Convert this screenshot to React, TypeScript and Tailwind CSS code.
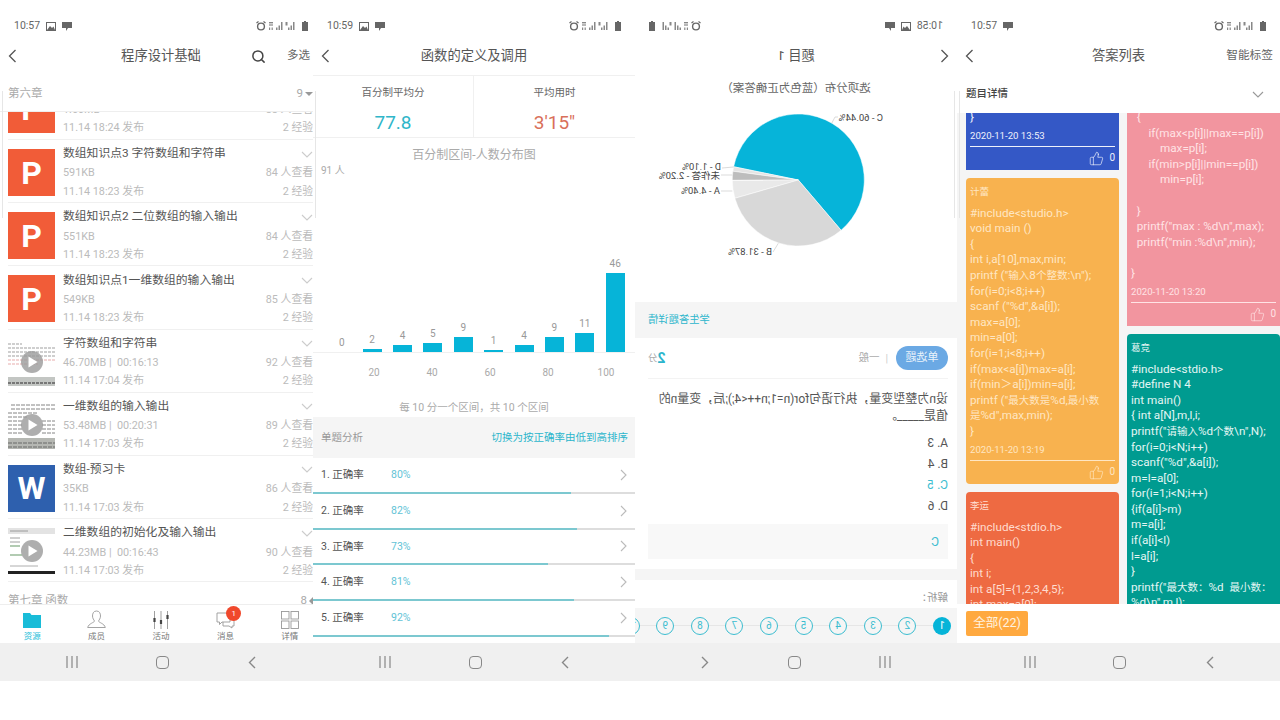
import { Search, ThumbsUp } from "lucide-react";

const Back = () => (
  <svg width="9" height="14" viewBox="0 0 9 14" fill="none" stroke="#555" strokeWidth="1.3">
    <path d="M7.5 1 L1.5 7 L7.5 13" />
  </svg>
);

const ChevronDown = ({ color = "#ccc" }: { color?: string }) => (
  <svg width="12" height="7" viewBox="0 0 12 7" fill="none" stroke={color} strokeWidth="1.1">
    <path d="M1 1 L6 6 L11 1" />
  </svg>
);

const ChevronRight = () => (
  <svg width="7" height="12" viewBox="0 0 7 12" fill="none" stroke="#bbb" strokeWidth="1.1">
    <path d="M1 1 L6 6 L1 11" />
  </svg>
);

const StatusBar = ({ time, image = true }: { time: string; image?: boolean }) => (
  <div className="h-[40px] pt-[12px] px-[14px] flex items-center justify-between text-[#666] shrink-0">
    <div className="flex items-center gap-[6px]">
      <span className="text-[10.5px]">{time}</span>
      {image && (
        <svg width="10" height="9" viewBox="0 0 10 9">
          <rect x="0.5" y="0.5" width="9" height="8" fill="none" stroke="#666" />
          <path d="M1 8 L4 4 L6 6 L7.5 4.5 L9 8 Z" fill="#666" />
        </svg>
      )}
      <svg width="10" height="9" viewBox="0 0 10 9">
        <path d="M0 0 H10 V6 H6 L4 9 V6 H0 Z" fill="#666" />
      </svg>
    </div>
    <div className="flex items-center gap-[2px]">
      <svg width="10" height="10" viewBox="0 0 10 10">
        <circle cx="5" cy="5.5" r="3.4" fill="none" stroke="#666" strokeWidth="1.4" />
        <path d="M0.5 2 L2.5 0.5 M9.5 2 L7.5 0.5" stroke="#666" strokeWidth="1.2" />
      </svg>
      <svg width="32" height="10" viewBox="0 0 32 10" fill="#888">
        <rect x="1" y="1" width="4" height="1.4" />
        <rect x="1" y="3.4" width="4" height="1.2" />
        <rect x="1" y="6.5" width="1.2" height="2.5" />
        <rect x="3.6" y="6.5" width="1.2" height="2.5" />
        <rect x="8" y="6.5" width="1.5" height="2.5" />
        <rect x="10.5" y="4.5" width="1.5" height="4.5" />
        <rect x="13" y="1" width="1.5" height="8" />
        <rect x="17.5" y="1" width="2" height="3.5" />
        <rect x="20" y="6.5" width="1.5" height="2.5" />
        <rect x="22.5" y="4.5" width="1.5" height="4.5" />
        <rect x="25" y="1" width="1.5" height="8" />
      </svg>
      <svg width="6" height="10" viewBox="0 0 6 10">
        <path d="M2 0 H4 V1 H6 V10 H0 V1 H2 Z" fill="#666" />
      </svg>
    </div>
  </div>
);

const NavKeys = () => (
  <div className="h-[38px] pl-[2px] bg-[#f0f0f0] flex justify-center items-center shrink-0">
    <div className="w-[90px] flex justify-center">
      <svg width="12" height="12" viewBox="0 0 12 12" stroke="#888" strokeWidth="1.2">
        <path d="M1 0 V12 M6 0 V12 M11 0 V12" />
      </svg>
    </div>
    <div className="w-[90px] flex justify-center">
      <div className="w-[13px] h-[13px] border-[1.5px] border-[#888] rounded-[4px]" />
    </div>
    <div className="w-[90px] flex justify-center">
      <svg width="8" height="13" viewBox="0 0 8 13" fill="none" stroke="#888" strokeWidth="1.4">
        <path d="M7 1 L1.5 6.5 L7 12" />
      </svg>
    </div>
  </div>
);

const Header = ({ title, right }: { title: string; right?: React.ReactNode }) => (
  <div className="h-[35px] pb-[3px] grid grid-cols-[80px_1fr_80px] items-center shrink-0">
    <div className="pl-[8px]">
      <Back />
    </div>
    <div className="text-center text-[13.3px] text-[#555] whitespace-nowrap">{title}</div>
    <div className="flex justify-end items-center">{right}</div>
  </div>
);

const EdgeLine = () => <div className="absolute left-[2px] top-[91px] h-[127px] w-px bg-[#e6e6e6]" />;

const PptThumb = () => (
  <div className="w-[47px] h-[47px] bg-[#f15c38] flex items-center justify-center text-white text-[32px] font-bold">P</div>
);

const WordThumb = () => (
  <div className="w-[47px] h-[47px] bg-[#2e60ae] flex items-center justify-center text-white text-[32px] font-bold">W</div>
);

const VideoThumb = ({ kind }: { kind: number }) => (
  <svg width="47" height="47" viewBox="0 0 47 47" className="block">
    <rect width="47" height="47" fill="#fff" />
    {kind === 0 && (
      <g stroke="#777" strokeWidth="0.7" strokeDasharray="3 1">
        <path d="M0 5 H14 M0 9 H47 M0 13 H47 M0 17 H47" />
        <path d="M0 21 H47" stroke="#d88" />
        <path d="M0 25 H30" stroke="#d88" />
        <rect x="0" y="38" width="47" height="9" fill="#c3c6c3" stroke="none" />
        <path d="M0 44 H47" stroke="#777" strokeWidth="2" />
      </g>
    )}
    {kind === 1 && (
      <g stroke="#666" strokeWidth="0.8" strokeDasharray="4 1">
        <path d="M3 3 H47 M3 7 H47 M0 11 H30 M0 15 H20 M0 19 H14 M34 19 H47 M0 23 H14 M34 23 H47 M0 27 H14 M34 27 H47 M0 31 H14 M34 31 H47" />
        <rect x="0" y="36" width="47" height="11" fill="#b5b7b2" stroke="none" />
        <path d="M0 41 H47 M0 45 H47" stroke="#555" />
      </g>
    )}
    {kind === 2 && (
      <g>
        <rect x="0" y="0" width="47" height="6" fill="#e3e3e3" />
        <path d="M2 3 H20 M2 10 H12 M2 14 H12" stroke="#888" strokeWidth="0.8" />
        <path d="M2 18 H12 M2 27 H14" stroke="#9b9" strokeWidth="1.4" />
        <path d="M2 38 H30" stroke="#999" strokeWidth="0.8" />
        <rect x="0" y="43" width="47" height="3" fill="#222" />
      </g>
    )}
    <circle cx="24" cy="23" r="11" fill="#9a9a9a" opacity="0.8" />
    <path d="M20.5 17.5 L29.5 23 L20.5 28.5 Z" fill="#fff" />
  </svg>
);

const files = [
  { thumb: <PptThumb />, title: "", size: "1.60MB", time: "11.14 18:24 发布", views: "88 人查看" },
  { thumb: <PptThumb />, title: "数组知识点3 字符数组和字符串", size: "591KB", time: "11.14 18:23 发布", views: "84 人查看" },
  { thumb: <PptThumb />, title: "数组知识点2 二位数组的输入输出", size: "551KB", time: "11.14 18:23 发布", views: "84 人查看" },
  { thumb: <PptThumb />, title: "数组知识点1一维数组的输入输出", size: "549KB", time: "11.14 18:23 发布", views: "85 人查看" },
  { thumb: <VideoThumb kind={0} />, title: "字符数组和字符串", size: "46.70MB |  00:16:13", time: "11.14 17:04 发布", views: "92 人查看" },
  { thumb: <VideoThumb kind={1} />, title: "一维数组的输入输出", size: "53.48MB |  00:20:31", time: "11.14 17:03 发布", views: "89 人查看" },
  { thumb: <WordThumb />, title: "数组-预习卡", size: "35KB", time: "11.14 17:03 发布", views: "86 人查看" },
  { thumb: <VideoThumb kind={2} />, title: "二维数组的初始化及输入输出", size: "44.23MB |  00:16:43", time: "11.14 17:03 发布", views: "90 人查看" },
];

const FileRow = ({ file }: { file: (typeof files)[number] }) => (
  <div className="h-[63.2px] ml-[8px] mr-[9px] border-b border-[#f0f0f0] flex shrink-0">
    <div className="pt-[9px] w-[55px] shrink-0">{file.thumb}</div>
    <div className="flex-1 pt-[4px] text-[10.8px] text-[#bbb] whitespace-pre">
      <div className="h-[20px] flex items-center justify-between text-[11.8px] text-[#555]">
        <span>{file.title}</span>
        <ChevronDown />
      </div>
      <div className="h-[19px] flex items-center justify-between">
        <span>{file.size}</span>
        <span>{file.views}</span>
      </div>
      <div className="h-[17.5px] flex items-center justify-between">
        <span>{file.time}</span>
        <span>2 经验</span>
      </div>
    </div>
  </div>
);

const tabs = [
  {
    label: "资源",
    icon: (
      <svg width="18" height="16" viewBox="0 0 18 16">
        <path d="M0 1 H7 L8.5 3 H18 V16 H0 Z" fill="#19bcd8" />
      </svg>
    ),
  },
  {
    label: "成员",
    icon: (
      <svg width="19" height="19" viewBox="0 0 19 19" fill="none" stroke="#999" strokeWidth="0.9">
        <path d="M9.5 1 C6.5 1 5.5 3.5 5.5 6 C5.5 8.5 7 10 7.5 11 C7.5 12.5 1.5 13.5 0.7 17.5 H18.3 C17.5 13.5 11.5 12.5 11.5 11 C12 10 13.5 8.5 13.5 6 C13.5 3.5 12.5 1 9.5 1 Z" />
      </svg>
    ),
  },
  {
    label: "活动",
    icon: (
      <svg width="18" height="18" viewBox="0 0 18 18" stroke="#777">
        <path d="M2.5 0 V18 M9 0 V18 M15.5 0 V18" strokeWidth="0.7" />
        <path d="M2.5 7 V11 M9 9 V13 M15.5 4 V8" strokeWidth="2.2" stroke="#444" />
      </svg>
    ),
  },
  {
    label: "消息",
    icon: (
      <svg width="19" height="18" viewBox="0 0 19 18" fill="none" stroke="#999" strokeWidth="0.9">
        <path d="M1 2 H14 V11 H6 L3.5 13.5 V11 H1 Z" />
        <path d="M14 6 H18 V15 H16 V17 L13 15 H7 V11" />
      </svg>
    ),
  },
  {
    label: "详情",
    icon: (
      <svg width="18" height="18" viewBox="0 0 18 18" fill="none" stroke="#999" strokeWidth="0.9">
        <rect x="0.5" y="0.5" width="7.5" height="7.5" />
        <rect x="10" y="0.5" width="7.5" height="7.5" />
        <rect x="0.5" y="10" width="7.5" height="7.5" />
        <rect x="10" y="10" width="7.5" height="7.5" />
      </svg>
    ),
  },
];

const FilesScreen = () => (
  <div className="w-[313px] h-[681px] overflow-hidden shrink-0">
    <div className="relative w-[322px] h-[681px] flex flex-col bg-white overflow-hidden">
      <StatusBar time="10:57" />
      <Header
        title="程序设计基础"
        right={
          <div className="flex items-center gap-[21px] pr-[12px]">
            <Search size={15} color="#444" strokeWidth={2.4} />
            <span className="text-[11.5px] text-[#666]">多选</span>
          </div>
        }
      />
      <div className="h-[37px] pl-[8px] pr-[9px] pt-[2px] flex items-center justify-between text-[11.5px] text-[#aaa] border-b border-[#eee] shrink-0">
        <span>第六章</span>
        <span className="flex items-center gap-[2px]">
          9<span className="w-0 h-0 border-x-[4px] border-x-transparent border-t-[4px] border-t-[#999]" />
        </span>
      </div>
      <div className="flex-1 overflow-hidden">
        <div className="-mt-[35.2px]">
          {files.map((f, i) => (
            <FileRow key={i} file={f} />
          ))}
        </div>
        <div className="h-[37px] pl-[8px] pr-[9px] flex items-center justify-between text-[11.5px] text-[#aaa]">
          <span>第七章 函数</span>
          <span className="flex items-center gap-[2px]">
            8<span className="w-0 h-0 border-y-[4px] border-y-transparent border-r-[4px] border-r-[#999]" />
          </span>
        </div>
      </div>
      <div className="h-[39px] border-t border-[#eee] flex bg-white shrink-0">
        {tabs.map((t, i) => (
          <div key={t.label} className="relative flex-1 flex flex-col items-center">
            <div className="h-[26px] flex items-center pt-[3px]">{t.icon}</div>
            <span className={i === 0 ? "text-[8.5px] leading-[10px] text-[#19bcd8]" : "text-[8.5px] leading-[10px] text-[#777]"}>{t.label}</span>
            {i === 3 && (
              <span className="absolute left-[33px] top-[1px] w-[15px] h-[15px] rounded-full bg-[#f0482c] text-white text-[8px] flex items-center justify-center">
                1
              </span>
            )}
          </div>
        ))}
      </div>
      <NavKeys />
      <EdgeLine />
    </div>
  </div>
);

const bars = [0, 2, 4, 5, 9, 1, 4, 9, 11, 46];
const rates = [80, 82, 73, 81, 92];

const StatsScreen = () => (
  <div className="relative w-[322px] h-[681px] flex flex-col bg-white overflow-hidden shrink-0">
    <StatusBar time="10:59" />
    <Header title="函数的定义及调用" />
    <div className="h-[63px] flex border-y border-[#f0f0f0] shrink-0">
      <div className="w-[161px] border-r border-[#f0f0f0] flex flex-col items-center">
        <span className="mt-[9px] text-[10.5px] text-[#666]">百分制平均分</span>
        <span className="mt-[8px] text-[19px] leading-[28px] text-[#2fb6c9]">77.8</span>
      </div>
      <div className="flex-1 flex flex-col items-center">
        <span className="mt-[9px] text-[10.5px] text-[#666]">平均用时</span>
        <span className="mt-[8px] text-[19px] leading-[28px] text-[#d9705a]">3'15"</span>
      </div>
    </div>
    <div className="h-[25px] pt-[8px] flex items-center justify-center text-[12px] text-[#aaa] shrink-0">百分制区间-人数分布图</div>
    <div className="h-[16px] pl-[8px] text-[10px] leading-[16px] text-[#aaa] shrink-0">91 人</div>
    <div className="h-[174px] pl-[13.5px] flex items-end border-b border-[#f0f0f0] shrink-0">
      {bars.map((v, i) => (
        <div key={i} className="w-[30.4px] flex flex-col items-center">
          <span className="mb-[2px] text-[10px] leading-[14px] text-[#999]">{v}</span>
          <div className="w-[19px] bg-[#06b4d8]" style={{ height: v * 1.72 }} />
        </div>
      ))}
    </div>
    <div className="h-[38px] pl-[32px] flex items-center text-[10px] text-[#aaa] shrink-0">
      {[20, 40, 60, 80, 100].map((n) => (
        <span key={n} className="w-[58.5px] text-center">
          {n}
        </span>
      ))}
    </div>
    <div className="h-[26px] pt-[8px] flex items-center justify-center text-[10.5px] text-[#aaa] shrink-0">每 10 分一个区间，共 10 个区间</div>
    <div className="h-[41px] bg-[#f5f5f5] pl-[8px] pr-[7px] flex items-center justify-between shrink-0">
      <span className="text-[10.5px] text-[#999]">单题分析</span>
      <span className="text-[10.5px] text-[#2cb5cc]">切换为按正确率由低到高排序</span>
    </div>
    {rates.map((r, i) => (
      <div key={i} className="h-[35.8px] flex flex-col shrink-0">
        <div className="flex-1 flex items-center pl-[8px] pr-[8px]">
          <span className="w-[70px] text-[10.5px] text-[#555]">{i + 1}. 正确率</span>
          <span className="flex-1 text-[10.5px] text-[#62c3d6]">{r}%</span>
          <ChevronRight />
        </div>
        <div className="h-[2px] bg-[#dddddd]">
          <div className="h-[2px] bg-[#7cc8d0]" style={{ width: r + "%" }} />
        </div>
      </div>
    ))}
    <div className="flex-1" />
    <NavKeys />
    <EdgeLine />
  </div>
);

const PieChart = () => (
  <svg width="322" height="199" viewBox="0 0 322 199" className="block shrink-0">
    <g transform="translate(158.7 77)" stroke="#fff" strokeWidth="0.5">
      <path d="M0 0 L-42.78 50.26 A66 66 0 1 1 64.65 -13.27 Z" fill="#06b4d9" />
      <path d="M0 0 L64.65 -13.27 A66 66 0 0 1 65.41 -8.78 Z" fill="#e4e4e4" />
      <path d="M0 0 L65.41 -8.78 A66 66 0 0 1 66 0.35 Z" fill="#bdbdbd" />
      <path d="M0 0 L66 0.35 A66 66 0 0 1 63.41 18.3 Z" fill="#e9e9e9" />
      <path d="M0 0 L63.41 18.3 A66 66 0 0 1 -42.78 50.26 Z" fill="#d8d8d8" />
    </g>
    <g fill="none" stroke="#ccc" strokeWidth="0.7">
      <path d="M119 14 H122 L125.3 20.3" />
      <path d="M184 149 L178.7 140.3" />
      <path d="M236 88 H224.7" />
      <path d="M236 72 H224.7" />
      <path d="M235 65 L223.3 64" />
    </g>
    <g fill="#444" className="text-[9.5px]">
      <text x="74" y="17.5">C - 60.44%</text>
      <text x="185" y="152">B - 31.87%</text>
      <text x="237" y="91">A - 4.40%</text>
      <text x="237" y="76">未作答 - 2.20%</text>
      <text x="236" y="67">D - 1.10%</text>
    </g>
  </svg>
);

const QuestionScreen = () => (
  <div className="relative w-[322px] h-[681px] flex flex-col bg-white overflow-hidden shrink-0 -scale-x-100">
    <StatusBar time="10:58" />
    <Header title="题目 1" />
    <div className="h-[28px] flex items-center justify-center text-[11.5px] text-[#666] shrink-0">选项分布（蓝色为正确答案）</div>
    <PieChart />
    <div className="h-[36px] bg-[#f5f5f5] flex items-center justify-end pr-[13px] text-[10.3px] text-[#2cb5cc] shrink-0">学生答题详情</div>
    <div className="h-[41px] ml-[9px] mr-[13px] border-b border-[#f3f3f3] flex items-center shrink-0">
      <span className="w-[52px] h-[24px] rounded-full bg-[#6ba9e4] flex items-center justify-center text-[11px] text-[#eaf3fb]">单选题</span>
      <span className="ml-[8px] text-[10px] text-[#ccc]">|</span>
      <span className="ml-[6px] text-[10.5px] text-[#aaa]">一般</span>
      <span className="ml-auto text-[14px] font-bold text-[#2cb5cc] leading-none">2</span>
      <span className="text-[9.5px] text-[#aaa]">分</span>
    </div>
    <div className="mx-[9px] mt-[11.5px] text-[12px] leading-[17px] text-[#555] whitespace-nowrap shrink-0">
      <div>设n为整型变量，执行语句for(n=1;n++&lt;4;);后，变量n的</div>
      <div>值是_____。</div>
    </div>
    <div className="mx-[9px] mt-[8px] text-[12px] leading-[21px] text-[#555] shrink-0">
      <div>A. 3</div>
      <div>B. 4</div>
      <div className="text-[#3bbdd0]">C. 5</div>
      <div>D. 6</div>
    </div>
    <div className="ml-[9px] mr-[13px] mt-[7.5px] h-[35px] bg-[#f8f8f8] pl-[9px] flex items-center text-[12px] text-[#3bbdd0] shrink-0">C</div>
    <div className="mt-[10px] h-[11px] bg-[#f5f5f5] shrink-0" />
    <div className="h-[28px] pt-[8px] pl-[9px] flex items-center text-[10.5px] text-[#999] shrink-0">解析：</div>
    <div className="h-[35px] bg-[#f5f5f5] pl-[6px] flex items-center overflow-hidden shrink-0">
      {[1, 2, 3, 4, 5, 6, 7, 8, 9, 10].map((n) => (
        <div key={n} className="w-[34.6px] flex items-center shrink-0">
          <span
            className={
              n === 1
                ? "w-[18px] h-[18px] rounded-full bg-[#06b4d8] text-white text-[10px] flex items-center justify-center shrink-0"
                : "w-[18px] h-[18px] rounded-full border-[1.5px] border-[#3bbdd0] text-[#3bbdd0] text-[10px] flex items-center justify-center shrink-0"
            }
          >
            {n}
          </span>
          <span className="flex-1 h-px bg-[#e6e6e6]" />
        </div>
      ))}
    </div>
    <NavKeys />
    <EdgeLine />
  </div>
);

// the han text in the cards is drawn narrower than the latin around it
const CodeLine = ({ line }: { line: string }) => (
  <div className="h-[15.6px]">
    {line.split(/([\u4e00-\u9fff：]+)/).map((part, i) =>
      i % 2 ? (
        <span key={i} className="text-[10.5px]">
          {part}
        </span>
      ) : (
        part
      ),
    )}
  </div>
);

type CardProps = {
  color: string;
  text: string;
  name?: string;
  lines: string[];
  date?: string;
  flat?: boolean;
};

const AnswerCard = ({ color, text, name, lines, date, flat }: CardProps) => (
  <div className={(flat ? "" : "rounded-[4px] ") + color + " " + text + " px-[4px] text-[11.7px] leading-[15.6px] whitespace-pre shrink-0"}>
    {name && <div className="pt-[6px] mb-[6px] text-[9.5px] leading-[16px]">{name}</div>}
    {lines.map((l, i) => (
      <CodeLine key={i} line={l} />
    ))}
    {date && (
      <>
        <div className="mt-[2px] h-[16px] leading-[16px] text-[9.6px]">{date}</div>
        <div className="mt-[2px] h-[24px] border-t border-current flex items-center justify-end gap-[5px] text-[10px]">
          <ThumbsUp size={15} strokeWidth={1.1} />0
        </div>
      </>
    )}
  </div>
);

const AnswersScreen = () => (
  <div className="relative w-[323px] h-[681px] flex flex-col bg-white overflow-hidden shrink-0">
    <StatusBar time="10:57" image={false} />
    <Header title="答案列表" right={<span className="pr-[7px] text-[11.7px] text-[#666]">智能标签</span>} />
    <div className="h-[38px] pl-[9px] pr-[16px] flex items-center justify-between text-[10.5px] font-medium text-[#444] shrink-0">
      <span>题目详情</span>
      <ChevronDown color="#999" />
    </div>
    <div className="flex-1 bg-[#f5f5f5] pl-[9px] flex gap-[8px] overflow-hidden">
      <div className="w-[153px] -mt-[3px] flex flex-col gap-[8px]">
        <AnswerCard color="bg-[#3458c6]" text="text-[#eef1fb]" flat lines={["}"]} date="2020-11-20 13:53" />
        <AnswerCard
          color="bg-[#f8b24f]"
          text="text-[#ffe6c2]"
          name="计蕾"
          date="2020-11-20 13:19"
          lines={[
            "#include<studio.h>",
            "void main ()",
            "{",
            "int i,a[10],max,min;",
            'printf ("输入8个整数:\\n");',
            "for(i=0;i<8;i++)",
            'scanf ("%d",&a[i]);',
            "max=a[0];",
            "min=a[0];",
            "for(i=1;i<8;i++)",
            "if(max<a[i])max=a[i];",
            "if(min＞a[i])min=a[i];",
            'printf ("最大数是%d,最小数',
            '是%d",max,min);',
            "}",
          ]}
        />
        <AnswerCard
          color="bg-[#ee6a42]"
          text="text-[#ffdccf]"
          name="李运"
          lines={["#include<stdio.h>", "int main()", "{", "int i;", "int a[5]={1,2,3,4,5};", "int max=a[0];"]}
        />
      </div>
      <div className="w-[153px] -mt-[3px] flex flex-col gap-[8px]">
        <AnswerCard
          color="bg-[#f2959f]"
          text="text-[#ffe3e5]"
          flat
          date="2020-11-20 13:20"
          lines={[
            "  {",
            "      if(max<p[i]||max==p[i])",
            "          max=p[i];",
            "      if(min>p[i]||min==p[i])",
            "          min=p[i];",
            " ",
            "  }",
            '  printf("max : %d\\n",max);',
            '  printf("min :%d\\n",min);',
            " ",
            "}",
          ]}
        />
        <AnswerCard
          color="bg-[#009b90]"
          text="text-[#e3f6f4]"
          name="葛竞"
          lines={[
            "#include<stdio.h>",
            "#define N 4",
            "int main()",
            "{ int a[N],m,l,i;",
            'printf("请输入%d个数\\n",N);',
            "for(i=0;i<N;i++)",
            'scanf("%d",&a[i]);',
            "m=l=a[0];",
            "for(i=1;i<N;i++)",
            "{if(a[i]>m)",
            "m=a[i];",
            "if(a[i]<l)",
            "l=a[i];",
            "}",
            'printf("最大数：%d  最小数：',
            '%d\\n",m,l);',
          ]}
        />
      </div>
    </div>
    <div className="h-[39px] pl-[9px] pt-[7px] bg-white shrink-0">
      <div className="w-[62px] h-[25px] rounded-[2px] bg-[#ffa93f] text-[#fff3e0] text-[12.5px] flex items-center justify-center">全部(22)</div>
    </div>
    <NavKeys />
    <EdgeLine />
  </div>
);

export default function App() {
  return (
    <div className="w-[1280px] h-[720px] bg-white flex overflow-hidden [font-family:Roboto,'Noto_Sans_CJK_SC',sans-serif]">
      <FilesScreen />
      <StatsScreen />
      <QuestionScreen />
      <AnswersScreen />
    </div>
  );
}
